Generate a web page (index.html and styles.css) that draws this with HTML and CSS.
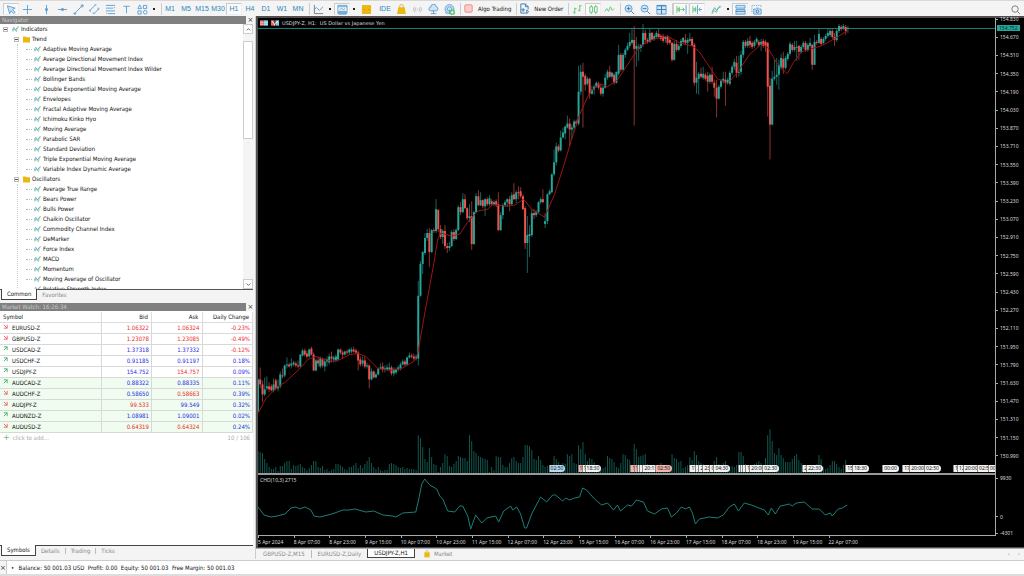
FILE: index.html
```html
<!DOCTYPE html>
<html lang="en">
<head>
<meta charset="utf-8">
<title>USDJPY-Z,H1</title>
<link rel="stylesheet" href="styles.css">
</head>
<body>
<header class="toolbar">
  <div class="group">
    <button class="tool on" aria-label="Cursor"><svg viewBox="0 0 12 12"><path class="sky" d="M1.500 2l8.500 2.500-3 1.500 3 3-1.500 1.500-3-3-1.500 3z"/></svg></button>
    <button class="tool" aria-label="Crosshair"><svg viewBox="0 0 12 12"><path d="M6 1v10M1 6h10"/></svg></button>
  </div>
  <div class="group">
    <button class="tool" aria-label="Vertical line"><svg viewBox="0 0 12 12"><path d="M6 1v10M5 5h2v2H5z"/></svg></button>
    <button class="tool" aria-label="Horizontal line"><svg viewBox="0 0 12 12"><path d="M1 6h10M5 5h2v2H5z"/></svg></button>
    <button class="tool" aria-label="Trend line"><svg viewBox="0 0 12 12"><path d="M2 10L10 2M1 10h2v1H1zM9 1h2v2H9z"/></svg></button>
    <button class="tool" aria-label="Channel"><svg viewBox="0 0 12 12"><path d="M1 7l6-6M5 11l6-6M1 6v2h1M10 4v2h1M4 10h2M6 1h2"/></svg></button>
    <button class="tool" aria-label="Fibonacci"><svg viewBox="0 0 12 12"><path d="M1 1.500h10M1 4.500h8M1 7.500h10M3 10.500h8M10 4h1M1 10h1"/></svg></button>
    <button class="tool" aria-label="Text"><svg viewBox="0 0 12 12"><path d="M2.500 2.500h7M6 2.500V10"/></svg></button>
    <button class="tool" aria-label="Shapes"><svg viewBox="0 0 12 12"><path d="M1 5l2-4 2 4zM7 1.500h3.500V5H7zM1 7.500h3.500V11H1z"/><circle cx="9" cy="9" r="2"/></svg></button>
    <button class="more" aria-label="More shapes"></button>
  </div>
  <div class="group ruled frames">
    <button class="tool">M1</button><button class="tool">M5</button><button class="tool">M15</button><button class="tool">M30</button><button class="tool on">H1</button><button class="tool">H4</button><button class="tool">D1</button><button class="tool">W1</button><button class="tool">MN</button>
  </div>
  <div class="group ruled">
    <button class="tool" aria-label="Chart type"><svg viewBox="0 0 12 12"><path class="gray" d="M1.500 1v9.500H11"/><path d="M2 5l2-1 3 3 4-4"/></svg></button>
    <button class="more" aria-label="More chart types"></button>
    <button class="tool on" aria-label="Template"><svg viewBox="0 0 12 12"><path d="M1 1.500h10v8.500H1zM1 3h10M3 6l2-1 2 1 2-1"/><path class="blue" d="M2 8h8v3H2z"/></svg></button>
    <button class="more" aria-label="More templates"></button>
    <button class="tool" aria-label="Depth"><svg viewBox="0 0 12 12"><rect class="gold" x="1" y="1" width="10" height="10" rx="1"/><path class="dim" d="M3 6h1M8 6h1"/></svg></button>
  </div>
  <div class="group frames">
    <button class="tool">IDE</button>
    <button class="tool" aria-label="Market"><svg viewBox="0 0 12 12"><path class="goldline" d="M4 4V2.500a2 2 0 0 1 4 0V4"/><path class="gold" d="M2.500 3.500h7l1.300 7.500H1.200z"/></svg></button>
    <button class="tool" aria-label="Signals"><svg viewBox="0 0 12 12"><path class="pale" d="M3 3Q0 6 3 9M9 3q3 3 0 6M4.500 4q-2 2 0 4M7.500 4q2 2 0 4M6 5.500v1"/></svg></button>
    <button class="tool" aria-label="Hosting"><svg viewBox="0 0 12 12"><path class="sky" d="M3 7.500a2 2 0 0 1 0-4 3 3 0 0 1 6-.5 2.300 2.300 0 0 1 0 4.500z"/><path d="M6 7v3.500M3 10.500h6"/></svg></button>
    <button class="tool" aria-label="Network"><svg viewBox="0 0 12 12"><circle class="sky" cx="6" cy="5.500" r="4.800"/><circle cx="6" cy="5.500" r="2.500"/><path d="M6 6v5M1.500 9l2 2"/><circle class="green fill" cx="9" cy="9" r="2.700"/><path class="white" d="M9 7.500v3M7.500 9h3"/></svg></button>
  </div>
  <div class="group ruled">
    <button class="wide"><svg viewBox="0 0 12 12"><rect class="stop" x="2" y="2" width="8" height="8" rx="1"/></svg>Algo Trading</button>
  </div>
  <div class="group ruled">
    <button class="wide"><svg viewBox="0 0 12 12"><path class="deep" d="M8 11H2V1h5l3 3v3M7 1v3h3M4.500 5.500v4M2.500 7.500h4"/><path class="deep" d="M8.500 7.500v4l2-2z"/></svg>New Order</button>
  </div>
  <div class="group ruled">
    <button class="tool" aria-label="Bars"><svg viewBox="0 0 12 12"><path class="green" d="M3 4v7M1 9h2M3 5h2M8.500 1v7M6.500 7h2M8.500 2h2"/></svg></button>
    <button class="tool on" aria-label="Candles"><svg viewBox="0 0 12 12"><path class="green" d="M2 3h3v6H2zM7 3h3v6H7zM3.500 1v2M3.500 9v2M8.500 1v2M8.500 9v2"/></svg></button>
    <button class="tool" aria-label="Line"><svg viewBox="0 0 12 12"><path class="green" d="M1 8l2-3 2 3 2-5 2 4 2-2"/></svg></button>
  </div>
  <div class="group ruled">
    <button class="tool" aria-label="Zoom in"><svg viewBox="0 0 12 12"><circle class="sky" cx="5" cy="5" r="3.800"/><path class="deep" d="M8 8l3 3M5 3v4M3 5h4"/></svg></button>
    <button class="tool" aria-label="Zoom out"><svg viewBox="0 0 12 12"><circle class="sky" cx="5" cy="5" r="3.800"/><path class="deep" d="M8 8l3 3M3 5h4"/></svg></button>
    <button class="tool" aria-label="Tile windows"><svg viewBox="0 0 12 12"><path class="sky" d="M1 1.500h10v9.500H1z"/><path class="deep" d="M6 1.500V11M1 6h10M1 2h10"/></svg></button>
  </div>
  <div class="group ruled">
    <button class="tool on" aria-label="Auto scroll"><svg viewBox="0 0 12 12"><path class="green" d="M1 2v8M3.500 3v6M2 5h2v2H2zM5 6h4M7.500 4L9 6 7.500 8"/><path d="M11 1v10"/></svg></button>
    <button class="tool on" aria-label="Chart shift"><svg viewBox="0 0 12 12"><path class="green" d="M1 2v8M4 3v6M2 5h2v2H2z"/><path d="M6 1v10M11 6H8M9 4L7.500 6 9 8"/></svg></button>
  </div>
  <div class="group">
    <button class="tool" aria-label="Indicators"><svg viewBox="0 0 12 12"><path d="M1 9l3-5 2 3 4-5"/><path class="green" d="M1 11l2-4 3 2 2-5 3-1"/></svg></button>
    <button class="more" aria-label="More indicators"></button>
    <button class="tool on" aria-label="Trade panel"><svg viewBox="0 0 12 12"><path class="sky" d="M1 1.500h10v3H1zM1 6h10v5H1z"/><path class="deep" d="M1 8h10"/></svg></button>
    <button class="tool" aria-label="Screenshot"><svg viewBox="0 0 12 12"><path stroke-dasharray="1 1" d="M1 9V1.500h10V4"/><path class="sky" d="M3 5.500h2l1-1h2l1 1h2V11H3z"/><circle class="deep" cx="7" cy="8" r="1.500"/></svg></button>
  </div>
  <button class="tool search" aria-label="Search"><svg viewBox="0 0 12 12"><circle class="gray" cx="5.500" cy="5.500" r="3.500"/><path class="gray" d="M8 8l3 3"/></svg></button>
</header>

<main class="workspace">
  <aside class="side">
    <section class="navigator">
      <h2 class="caption"><span>Navigator</span><button class="close" aria-label="Close navigator">×</button></h2>
      <div class="tree-box">
        <ul class="tree" id="tree"></ul>
        <div class="scroll"><button aria-label="Scroll up"><svg viewBox="0 0 8 8"><path d="M2 5l2-2 2 2"/></svg></button><i class="thumb"></i><button aria-label="Scroll down"><svg viewBox="0 0 8 8"><path d="M2 3l2 2 2-2"/></svg></button></div>
      </div>
      <nav class="tabs"><a href="#common" class="current">Common</a><a href="#favorites">Favorites</a></nav>
    </section>
    <section class="market">
      <h2 class="caption"><span>Market Watch: 16:26:34</span><button class="close" aria-label="Close market watch">×</button></h2>
      <div class="quotes-box">
        <table class="quotes">
          <thead><tr><th>Symbol</th><th>Bid</th><th>Ask</th><th>Daily Change</th></tr></thead>
          <tbody id="quotes"></tbody>
        </table>
        <div class="add"><b>+</b><span>click to add...</span><span class="count">10 / 106</span></div>
      </div>
      <nav class="tabs split"><a href="#symbols" class="current">Symbols</a><a href="#details">Details</a><a href="#trading">Trading</a><a href="#ticks">Ticks</a></nav>
    </section>
  </aside>

  <section class="stage">
    <div class="chart">
      <div class="plot">
        <svg class="layer" id="price" viewBox="258 18 738 457" preserveAspectRatio="none" role="img" aria-label="USDJPY hourly candles"></svg>
        <h1 class="title">
          <svg viewBox="0 0 9 6"><path fill="#e77" d="M0 0h4v6H0z"/><path fill="#8cd" d="M4 0h5v6H4z"/><path stroke="#fff" d="M0 2.500h9M0 4.500h9" stroke-width=".4"/></svg>
          <svg viewBox="0 0 9 6"><path fill="#e66" d="M0 0h4v6H0z"/><path fill="#8cd" d="M5 0h4v6H5z"/><path stroke="#fff" fill="none" d="M1 1l3 3 4-3M4 4v2"/></svg>
          <span>USDJPY-Z, H1:&nbsp; US Dollar vs Japanese Yen</span>
        </h1>
        <div class="events" id="events"></div>
      </div>
      <div class="scale" id="scale"><output class="last">154.752</output></div>
      <div class="plot sub">
        <svg class="layer" viewBox="258 476 738 60" preserveAspectRatio="none" role="img" aria-label="Chaikin oscillator"><polyline class="cho" points="258,508 264,516 271,518 277,517 285,515 291,509 296,508 300,510 305,508 311,511 314,517 320,518 332,515 343,511 349,511 355,510 366,513 374,512 383,516 393,517 396,518 403,514 416,513 419,500 422,485 425,480 430,486 437,490 440,497 443,500 448,512 455,513 460,507 463,507 468,517 471,530 476,516 482,524 487,519 496,517 499,523 504,512 511,507 513,511 517,508 521,515 525,529 527,529 532,515 541,498 547,503 553,496 556,496 563,502 566,499 570,501 575,499 580,498 583,489 587,491 595,500 602,506 608,504 614,511 618,506 621,512 628,506 632,507 637,501 644,503 648,512 655,515 662,510 668,509 672,518 677,514 682,508 686,510 690,508 693,514 696,525 700,520 710,518 718,519 724,516 730,508 735,505 739,512 745,504 752,506 757,508 765,511 769,516 772,509 776,515 781,507 786,506 790,505 793,507 797,504 805,503 813,510 820,510 826,516 831,514 833,517 839,510 843,509 848,506"/></svg>
        <span class="note">CHO(10,3) 2715</span>
      </div>
      <div class="scale subscale"><span>9930</span><span>0</span><span>-4301</span></div>
      <div class="times" id="times"></div>
    </div>
    <nav class="windows">
      <a href="#gbp">GBPUSD-Z,M15</a><a href="#eur">EURUSD-Z,Daily</a><a href="#jpy" class="current">USDJPY-Z,H1</a><a href="#market" class="shop"><svg viewBox="0 0 12 12"><path class="goldline" d="M4 4V2.500a2 2 0 0 1 4 0V4"/><path class="gold" d="M2 3.500h8V11H2z"/></svg>Market</a>
      <span class="pager"><button aria-label="Previous">‹</button><button aria-label="Next">›</button></span>
    </nav>
  </section>
</main>

<footer class="status"><button class="close" aria-label="Close toolbox">×</button><p>•&ensp; Balance: 50 001.03 USD&nbsp; Profit: 0.00&nbsp; Equity: 50 001.03&nbsp; Free Margin: 50 001.03</p></footer>
<script src="app.js"></script>
</body>
</html>
```
FILE: styles.css
```css
* { box-sizing: border-box; }
body { margin: 0; height: 100vh; display: flex; flex-direction: column; overflow: hidden; background: #f4f4f4; color: #111; font: 6px/8px "DejaVu Sans Condensed", "Noto Sans", sans-serif; }
button { border: 0; padding: 0; margin: 0; background: none; font: inherit; color: inherit; }
a { color: inherit; text-decoration: none; }
h1, h2, p, ul { margin: 0; padding: 0; font: inherit; list-style: none; }

.toolbar { flex: none; display: flex; align-items: center; gap: 3px; height: 16px; padding: 1px 1px 1px 3px; border-top: 1px solid #d8d8d8; }
.group { display: flex; align-items: center; height: 12px; }
.ruled { border-left: 1px solid #ccc; }
.tool { width: 16px; height: 12px; display: grid; place-items: center; border: 1px solid transparent; }
.tool.on { border-color: #ccc #eee #eee #ccc; background: #fafafa; }
.toolbar svg { width: 11px; height: 11px; fill: none; stroke: #5a9fd4; stroke-width: 1; }
.frames { color: #2f86bd; font: 7px/8px "Liberation Sans", sans-serif; }
.more { width: 8px; height: 12px; display: grid; place-items: center; }
.more::after { content: ""; width: 2px; height: 2px; background: #222; }
.wide { display: flex; align-items: center; gap: 4px; padding: 0 2px; }
.search { margin-left: auto; }
svg .green { stroke: #62c476; }
svg .gray { stroke: #777; }
svg .pale { stroke: #bbb; }
svg .sky { fill: #cfe4f5; }
svg .blue { fill: #78b5e2; }
svg .deep { stroke: #3878b0; }
svg .white { stroke: #fff; }
svg .fill { fill: #62c476; }
svg .gold { fill: #ebb712; stroke: none; }
svg .goldline { fill: none; stroke: #d9b04a; }
svg .dim { stroke: #b98a00; }
svg .stop { fill: #fbd0cc; stroke: #ee8880; }

.workspace { flex: 1; min-height: 0; display: flex; }
.side { flex: 0 0 256px; display: flex; flex-direction: column; border-right: 1px solid #ccc; }
.caption { display: flex; flex: none; height: 8px; line-height: 8px; color: #c8c8c8; background: #808080; padding-left: 2px; }
.caption span { flex: 1; }
.close { width: 9px; font: 7px/8px "DejaVu Sans", sans-serif; color: #333; background: #f4f4f4; }
.navigator { flex: 0 0 287px; min-height: 0; display: flex; flex-direction: column; }
.tree-box { flex: 1; min-height: 0; display: flex; background: #fff; border-bottom: 1px solid #555; margin-right: 2px; }
.tree { flex: 1; overflow: hidden; padding: 0 0 0 3px; }
.tree ul { padding-left: 11px; }
.tree .row { display: flex; align-items: center; gap: 2px; height: 10px; white-space: nowrap; }
.tree .kids { margin-left: 3px; padding-left: 8px; border-left: 1px dotted #ccc; }
.tree .leaf::before { content: ""; width: 6px; border-top: 1px dotted #bbb; }
.tree svg { width: 7px; height: 8px; fill: none; stroke-width: .8; }
.tree .box { width: 5px; height: 5px; border: 1px solid #bbb; display: grid; place-items: center; margin-right: 2px; }
.tree .box::after { content: ""; width: 3px; height: 1px; background: #555; }
.scroll { width: 10px; display: flex; flex-direction: column; background: #f4f4f4; }
.scroll button { height: 10px; border: 1px solid #ccc; background: #fff; display: grid; place-items: center; }
.scroll svg { width: 7px; height: 7px; fill: none; stroke: #555; }
.thumb { flex: 0 0 98px; margin: 7px 0 auto; border: 1px solid #ccc; background: #fff; }

.tabs { display: flex; align-items: flex-start; flex: none; height: 13px; color: #888; }
.tabs a { padding: 0 5px; line-height: 9px; }
.tabs .current { background: #fff; color: #111; border: solid #444; border-width: 0 1px 1px; margin: -1px 0 0 1px; line-height: 10px; }
.split a + a + a { border-left: 1px solid #bbb; margin-top: 2px; line-height: 6px; }

.market { flex: 1; min-height: 0; display: flex; flex-direction: column; }
.quotes-box { flex: 1; background: #fff; border-bottom: 1px solid #444; margin-right: 2px; padding-top: 1px; }
.quotes { width: 100%; border-collapse: collapse; table-layout: fixed; text-align: right; }
.quotes th { font-weight: normal; height: 10px; padding: 0 3px; border-right: 1px solid #ddd; border-bottom: 1px solid #ddd; white-space: nowrap; }
.quotes th:first-child { width: 40%; text-align: left; }
.quotes td { height: 11px; padding: 0 2px; border: solid #d8d8d8; border-width: 0 1px 1px 0; color: #2b2bea; }
.quotes td:first-child { text-align: left; color: #111; }
.quotes tr .down { color: #ee2a2a; }
.quotes .alt { background: #effcef; }
.quotes svg { width: 5px; height: 5px; fill: none; stroke-width: 1; margin: 0 4px 1px 1px; }
.quotes .mark-up { stroke: #35a860; }
.quotes .mark-down { stroke: #ee5050; }
.add { display: flex; gap: 3px; padding: 1px 3px; color: #aaa; }
.add b { color: #62c476; font: 8px/7px "DejaVu Sans", sans-serif; }
.count { margin-left: auto; }

.stage { flex: 1; min-width: 0; display: flex; flex-direction: column; }
.chart { flex: 1; min-height: 0; display: grid; grid-template-columns: 1fr 28px; grid-template-rows: 457fr 61fr 11px; background: #000; color: #ddd; border: solid #505050; border-width: 2px 0 1px 2px; font: 5px/6px "Noto Sans", sans-serif; }
.plot { position: relative; min-height: 0; border-right: 1px solid #aaa; border-bottom: 2px solid #999; overflow: hidden; }
.sub { border-bottom: 1px solid #aaa; }
.layer { display: block; width: 100%; height: 100%; }
.title { position: absolute; top: 2px; left: 2px; display: flex; align-items: center; gap: 3px; font: 5px/6px "DejaVu Sans", sans-serif; }
.title svg { width: 8px; height: 6px; }
.note { position: absolute; top: 2px; left: 2px; }
.scale { position: relative; min-height: 0; display: flex; flex-direction: column; justify-content: space-between; padding-bottom: 18px; }
.scale span { display: flex; align-items: center; gap: 2px; height: 2px; white-space: nowrap; }
.scale span::before { content: ""; width: 2px; border-top: 1px solid #aaa; }
.last { position: absolute; top: 7px; left: 1px; padding: 0 2px; background: #26a69a; color: #033; }
.subscale { padding: 2px 0; }
.subscale span:nth-child(2) { margin-top: 22px; }
.times { grid-column: 1 / -1; display: flex; margin-right: 28px; }
.times span { flex: 0 0 4.8333%; white-space: nowrap; line-height: 8px; }
.times span::before { content: ""; display: block; width: 1px; height: 2px; background: #aaa; }
.cho, .ma { fill: none; stroke: #1c8078; stroke-width: 1; }
.ma { stroke: #a01414; }
.vol { stroke: #10584f; stroke-width: 1; }
.wick { stroke-width: 1; opacity: .6; }
.body { stroke-width: 2; }
.rise { stroke: #26a69a; }
.fall { stroke: #ef5350; }
.bid { stroke: #1c8078; stroke-width: 1; }
.events span { position: absolute; bottom: 1px; height: 7px; line-height: 7px; padding: 0 2px 0 1px; background: #f2f2f2; color: #111; border-left: 1px solid #888; border-radius: 0 4px 4px 0; }
.events .flat { border-radius: 0; padding-right: 0; }
.events .info { background: #b9d8f2; }
.events .hot { background: #f3b5ae; }

.windows { flex: 0 0 11px; display: flex; align-items: center; color: #888; padding: 0 0 1px 1px; border-top: 1px solid #aaa; }
.windows a { padding: 0 6px; }
.windows a + a { border-left: 1px solid #bbb; }
.windows a.current { border: 1px solid #444; border-top: 0; background: #fff; color: #111; align-self: stretch; }
.windows a.shop { display: flex; align-items: center; gap: 3px; border: 0; padding-left: 8px; }
.windows svg { width: 8px; height: 8px; }
.pager { margin-left: auto; display: flex; gap: 8px; padding-right: 4px; }

.status { flex: none; display: flex; height: 16px; margin-top: 1px; border-top: 1px solid #ccc; border-bottom: 2px solid #ddd; background: #fff; }
.status .close { height: 13px; width: 7px; border-right: 1px solid #ccc; }
.status p { padding: 3px 4px; }
```
FILE: app.js
```js
const byId = id => document.getElementById(id);

const groups = [
  ["Trend", ["Adaptive Moving Average", "Average Directional Movement Index", "Average Directional Movement Index Wilder", "Bollinger Bands", "Double Exponential Moving Average", "Envelopes", "Fractal Adaptive Moving Average", "Ichimoku Kinko Hyo", "Moving Average", "Parabolic SAR", "Standard Deviation", "Triple Exponential Moving Average", "Variable Index Dynamic Average"]],
  ["Oscillators", ["Average True Range", "Bears Power", "Bulls Power", "Chaikin Oscillator", "Commodity Channel Index", "DeMarker", "Force Index", "MACD", "Momentum", "Moving Average of Oscillator", "Relative Strength Index"]]
];
const wave = '<svg viewBox="0 0 8 8"><path stroke="#4d94d0" d="M0 6l2-4 2 3 3-4"/><path stroke="#5cba78" d="M1 7l1-3 3 3 1-4 2-2"/></svg>';
const folder = '<svg viewBox="0 0 8 8"><path fill="#ebb712" d="M0 1h3l1 1h4v6H0z"/></svg>';
byId("tree").innerHTML = `<li><div class="row"><i class="box"></i>${wave}Indicators</div><ul>` +
  groups.map(([name, items]) => `<li><div class="row"><i class="box"></i>${folder}${name}</div><ul class="kids">` +
    items.map(t => `<li class="row leaf">${wave}${t}</li>`).join("") + "</ul></li>").join("") + "</ul></li>";

// symbol, tick direction, bid, bid colour, ask, ask colour, daily change
const quotes = [
  ["EURUSD-Z", 0, "1.06322", 0, "1.06324", 0, "-0.23%"],
  ["GBPUSD-Z", 0, "1.23078", 0, "1.23085", 0, "-0.49%"],
  ["USDCAD-Z", 1, "1.37318", 1, "1.37332", 1, "-0.12%"],
  ["USDCHF-Z", 1, "0.91185", 1, "0.91197", 1, "0.18%"],
  ["USDJPY-Z", 1, "154.752", 1, "154.757", 0, "0.09%"],
  ["AUDCAD-Z", 1, "0.88322", 1, "0.88335", 1, "0.11%"],
  ["AUDCHF-Z", 0, "0.58650", 1, "0.58663", 0, "0.39%"],
  ["AUDJPY-Z", 0, "99.533", 0, "99.549", 1, "0.32%"],
  ["AUDNZD-Z", 1, "1.08981", 1, "1.09001", 1, "0.02%"],
  ["AUDUSD-Z", 0, "0.64319", 0, "0.64324", 0, "0.24%"]
];
const tone = up => up ? "up" : "down";
byId("quotes").innerHTML = quotes.map(([s, d, b, bu, a, au, c], i) =>
  `<tr class="${i > 4 ? "alt" : ""}"><td><svg class="mark-${tone(d)}" viewBox="0 0 6 6"><path d="${d ? "M1 5l4-4M1 1h4v4" : "M1 1l4 4M5 1v4H1"}"/></svg>${s}</td>` +
  `<td class="${tone(bu)}">${b}</td><td class="${tone(au)}">${a}</td><td class="${tone(c[0] !== "-")}">${c}</td></tr>`).join("");

// open, close and, where they stand out, high and low, in chart units
const bars = `413,381,380,414 381,386,369,390 386,396,382,404 396,391,379,398 390,388,378,392 388,391,384,394 388,392,386,393 392,386,380,394 382,390,380,392 390,388,381,393
388,376,373,390 377,378,370,380 377,367,366,379 367,366,359,370 366,368,364,369 367,365,360,370 366,364 365,367 367,368,362,370 368,356,356,369
357,352,350,358 352,356,350,358 355,358,352,360 358,351,350,359 350,356,348,357 356,372,354,373 372,362,360,373 362,365,358,368 368,360 361,367
368,363,360,373 363,361,358,368 364,358,355,366 358,360,353,364 361,359,357,364 362,358 361,351,350,363 351,354,350,356 354,356,352,360 356,353,352,357
353,354 354,351,350,356 353,351,349,355 351,353,348,354 352,354 354,362,352,372 361,366,358,368 365,362,358,368 362,368,358,370 368,367,364,370
367,381,366,390 381,373,370,382 373,379,372,380 379,376,374,380 376,370,369,377 370,369,365,371 368,371,364,374 371,370,367,374 371,369,366,372 371,369,364,372
369,375,367,377 375,371,369,378 374,371 371,369 370,366 366,363,361,367 363,366 366,359,358,367 359,357,354,360 357,358,355,360
358,360,355,362 360,358 360,297,282,367 297,265,262,298 265,253,252,275 254,239,234,256 239,234,230,242 234,253,229,268 253,231,230,254 231,232,229,234
232,210,200,234 211,230,210,233 230,238,226,240 238,232,230,245 232,247,226,250 247,249,244,254 249,247,243,252 247,233,231,248 233,240,230,242 240,231,229,241
231,208,206,232 208,213,203,216 213,200,194,214 200,209,195,210 209,219,208,221 219,217,205,223 217,245,202,251 245,213,212,246 213,197,194,214 197,206,191,207
206,201,193,207 201,207,200,209 207,200,199,217 200,205 205,199,196,207 202,205 205,203 202,206 205,231,193,232 231,216,213,232
216,206,204,220 206,203 203,200,199,208 200,205,197,212 205,196,193,206 195,200,184,201 200,193,191,204 193,194,187,200 192,197,188,199 197,210,195,211
209,244,207,250 244,236,217,274 237,235,226,258 236,214,210,238 214,216,210,220 216,213 213,203,202,214 203,200,198,205 200,203,190,204 225,222,214,229
222,195,194,225 195,192,190,196 193,175,174,194 175,163,150,177 163,147,143,166 147,151,145,153 151,138,131,152 138,133,128,139 134,127,126,140 128,124,116,129
124,130,119,147 130,128,125,140 128,122,120,132 122,124 124,92,66,126 92,72,65,95 72,77,63,128 76,85,74,91 84,79,77,86 79,94,78,99
94,90,86,95 90,87,85,95 87,83,82,88 84,88 88,94,84,96 94,88,86,97 88,78,74,89 78,72,70,80 72,77,66,78 77,73,72,79
75,83,73,85 83,72,72,84 74,55,45,76 55,70,53,72 70,55,53,71 55,50,48,58 50,46,43,51 46,42,33,48 43,40,28,45 40,49,26,126
49,46,37,67 49,47,44,61 48,45,44,52 45,33,24,47 33,40,30,44 40,42 42,33,29,43 33,40,32,41 39,36,34,41 37,33,31,38
34,37,29,38 36,39 36,41 39,37,36,43 37,43 40,43 43,60,42,62 60,44,41,61 44,50,40,52 50,46,44,51
46,41 42,38,37,44 40,43,34,45 43,40,38,54 41,39,33,42 39,46,37,47 45,83,43,86 83,78,62,94 79,74,72,95 74,77,68,79
78,74,67,80 75,79 76,82,72,92 82,75 75,82,67,84 83,88,80,97 88,99,80,118 99,87,85,100 87,81 81,79,72,84
80,83,72,106 83,80 84,73 73,67 67,62,59,70 63,73,56,78 73,72,56,77 72,55,51,75 55,42,40,58 42,46
46,41,38,48 41,45,36,48 43,47 46,42 42,39 42,45 45,42,39,51 41,46 42,46,40,52 43,87,42,117
86,125,78,160 125,79,71,126 79,77,60,81 77,75,58,85 75,65,60,90 68,58,54,70 59,68,52,74 68,58 59,54 54,44
45,50 50,47,41,52 47,47,41,61 46,52,45,60 52,47 47,43 43,50 50,45 46,43,38,48 45,65,44,70
65,42,35,65 42,43 43,34,29,44 39,44 43,39 39,36 36,33,29,38 35,31 31,37 37,40,33,46
40,31 31,26 27,29 28,26 27,31,25,35 28,28,26,33`.split(/\s+/).map(r => r.split(",").map(Number));

const volumes = `22 21 20 14 10 6 4 4 6 2 7 7 10 12 12 4 8 7 8 9 6 5 3 5 8 12 12 6 5 7 3 4 2 3 4 9 9 8 6 4
3 6 6 8 10 5 8 5 9 12 16 10 6 4 6 3 2 3 3 9 10 9 8 6 5 6 4 5 4 4 4 3 38 35 26 14 11 25 16 9
8 1 6 10 19 17 7 6 9 12 17 16 15 15 12 38 32 22 20 17 16 15 14 13 1 6 3 17 16 16 8 6 6 10 15 16 12 10 10 16
28 28 27 23 14 13 17 13 8 6 7 1 6 17 14 11 8 10 9 19 17 19 10 9 28 24 31 19 12 15 14 11 8 3 4 5 6 17 15 14
11 6 5 10 19 18 14 13 8 29 24 16 17 18 19 9 8 5 3 4 8 10 8 6 7 6 19 15 14 11 12 5 6 8 16 13 22 18 12 10
9 8 7 5 6 12 16 9 8 10 12 5 6 7 6 8 21 21 17 9 8 7 8 9 10 12 10 8 15 38 44 32 20 18 25 18 15 11 11 11
14 17 19 13 10 8 5 4 5 4 3 9 18 14 6 4 5 8 12 12 9 6 4 8 13 5`.split(/\s+/).map(Number);

const x = i => (258 + i * 2.229).toFixed(1);
const line = (cls, i, y1, y2) => `<path class="${cls}" d="M${x(i)} ${y1}V${y2}"/>`;
let art = '<path class="bid" d="M258 28.500H996"/>';
volumes.forEach((v, i) => { art += line("vol", i, 475, 475 - v); });
bars.forEach(([o, c, h = Math.min(o, c) - 2, l = Math.max(o, c) + 2], i) => {
  const dir = c <= o ? "rise" : "fall";
  art += line("wick " + dir, i, h, l) + line("body " + dir, i, Math.min(o, c), Math.max(o, c) + (o === c ? 1 : 0));
});
art += '<polyline class="ma" points="258,415 266,400 278,388 285,384 300,370 308,361 316,358 332,363 340,361 350,356 358,355 366,358 378,370 390,372 402,370 414,363 418,355 424,320 434,265 438,240 441,234 452,237 460,235 468,223 478,212 488,210 493,205 505,207 515,206 524,200 532,210 545,218 555,195 563,170 572,140 580,115 590,93 600,84 608,87 618,80 630,62 640,47 652,40 668,36 680,43 693,46 700,52 712,70 718,79 728,84 738,73 750,55 762,44 768,47 778,64 788,74 794,63 802,52 812,49 822,46 835,39 848,31"/>';
byId("price").innerHTML = art;

let labels = "";
for (let p = 154830; p >= 150990; p -= 160) labels += `<span>${(p / 1000).toFixed(3)}</span>`;
byId("scale").insertAdjacentHTML("afterbegin", labels);

byId("times").innerHTML = ["5 Apr 2024", "8 Apr 07:00", "8 Apr 23:00", "9 Apr 15:00", "10 Apr 07:00", "10 Apr 23:00", "11 Apr 15:00", "12 Apr 07:00", "12 Apr 23:00", "15 Apr 15:00", "16 Apr 07:00", "16 Apr 23:00", "17 Apr 15:00", "18 Apr 07:00", "18 Apr 23:00", "19 Apr 15:00", "22 Apr 07:00"].map(t => `<span>${t}</span>`).join("");

// calendar marks: position, caption, style
const events = [[549, "02:50", "info"], [578, "1", "flat hot"], [582, "1", "flat"], [585, "18:30", ""],
  [631, "1", "flat hot"], [634, "1", "flat hot"], [638, "1", "flat"], [640, "1", "flat"], [643, "20:15", "flat"], [656, "02:50", "hot"],
  [690, "17", "flat"], [696, "2", "flat"], [699, "2", "flat"], [703, "23", "flat"], [710, "0", "flat"], [714, "04:30", ""],
  [739, "1", "flat"], [741, "1", "flat"], [743, "1", "flat"], [746, "1", "flat"], [750, "20:00", "flat"], [763, "02:30", ""],
  [803, "2", "flat"], [807, "22:30", ""], [846, "15", "flat"], [853, "18:30", ""], [883, "00:00", ""],
  [903, "17", "flat"], [910, "20:00", "flat"], [925, "02:50", ""], [954, "1", "flat"], [958, "12", "flat"], [964, "20:00", "flat"], [978, "02:5", "flat"], [989, "00", "flat"]];
byId("events").innerHTML = events.map(([at, t, cls]) => `<span class="${cls}" style="left:${((at - 258) / 7.38).toFixed(2)}%">${t}</span>`).join("");
```
